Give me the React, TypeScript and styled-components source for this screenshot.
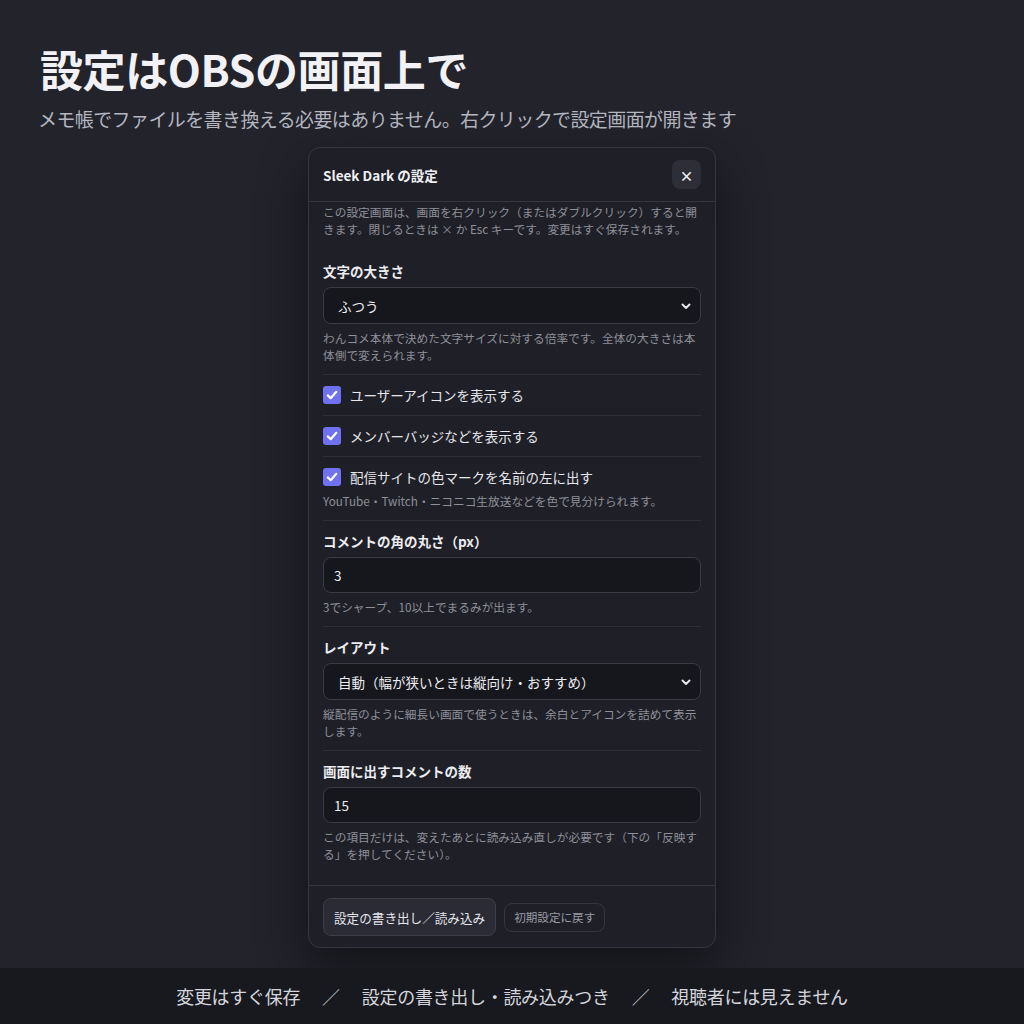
import React from "react";
import styled, { createGlobalStyle } from "styled-components";

const GlobalStyle = createGlobalStyle`
  html, body {
    margin: 0;
    padding: 0;
    background: #22232b;
  }
  body {
    font-family: "Noto Sans CJK JP", "Noto Sans", sans-serif;
    color: #e6e6ec;
  }
  * {
    box-sizing: border-box;
  }
`;

type CheckItem = { label: string; help?: string };

const checks: CheckItem[] = [
  { label: "ユーザーアイコンを表示する" },
  { label: "メンバーバッジなどを表示する" },
  {
    label: "配信サイトの色マークを名前の左に出す",
    help: "YouTube・Twitch・ニコニコ生放送などを色で見分けられます。",
  },
];

function Chevron() {
  return (
    <ChevronIcon width="12" height="12" viewBox="0 0 12 12">
      <path
        d="M2.5 4.5 L6 8 L9.5 4.5"
        fill="none"
        stroke="#e6e6ec"
        strokeWidth="2"
        strokeLinecap="round"
        strokeLinejoin="round"
      />
    </ChevronIcon>
  );
}

function Select({ options }: { options: string[] }) {
  return (
    <SelectWrap>
      <SelectBox defaultValue={options[0]}>
        {options.map((o) => (
          <option key={o}>{o}</option>
        ))}
      </SelectBox>
      <Chevron />
    </SelectWrap>
  );
}

function Check({ item }: { item: CheckItem }) {
  const [on, setOn] = React.useState(true);
  return (
    <Row>
      <CheckLine onClick={() => setOn(!on)}>
        <Box $on={on}>
          {on && (
            <svg width="14" height="14" viewBox="0 0 14 14">
              <path
                d="M2.8 7.4 L5.7 10.2 L11.3 3.8"
                fill="none"
                stroke="#fff"
                strokeWidth="2.2"
                strokeLinecap="round"
                strokeLinejoin="round"
              />
            </svg>
          )}
        </Box>
        <CheckText>{item.label}</CheckText>
      </CheckLine>
      {item.help && <Help $tight>{item.help}</Help>}
    </Row>
  );
}

export default function App() {
  return (
    <Page>
      <GlobalStyle />
      <Main>
        <Title>設定はOBSの画面上で</Title>
        <Lead>メモ帳でファイルを書き換える必要はありません。右クリックで設定画面が開きます</Lead>
        <Modal>
          <Header>
            <HeaderTitle>Sleek Dark の設定</HeaderTitle>
            <Close>×</Close>
          </Header>
          <Body>
            <Intro>
              この設定画面は、画面を右クリック（またはダブルクリック）すると開きます。閉じるときは × か Esc キーです。変更はすぐ保存されます。
            </Intro>
            <Field>
              <Label>文字の大きさ</Label>
              <Select options={["ふつう", "小さい", "大きい"]} />
              <Help>わんコメ本体で決めた文字サイズに対する倍率です。全体の大きさは本体側で変えられます。</Help>
            </Field>
            {checks.map((c) => (
              <Check key={c.label} item={c} />
            ))}
            <Field>
              <Label>コメントの角の丸さ（px）</Label>
              <Input defaultValue="3" />
              <Help>3でシャープ、10以上でまるみが出ます。</Help>
            </Field>
            <Field>
              <Label>レイアウト</Label>
              <Select options={["自動（幅が狭いときは縦向け・おすすめ）", "横向け", "縦向け"]} />
              <Help>縦配信のように細長い画面で使うときは、余白とアイコンを詰めて表示します。</Help>
            </Field>
            <Field $last>
              <Label>画面に出すコメントの数</Label>
              <Input defaultValue="15" />
              <Help>この項目だけは、変えたあとに読み込み直しが必要です（下の「反映する」を押してください）。</Help>
            </Field>
          </Body>
          <Actions>
            <Button>設定の書き出し／読み込み</Button>
            <Button $ghost>初期設定に戻す</Button>
          </Actions>
        </Modal>
      </Main>
      <Footer>
        <span>変更はすぐ保存</span>
        <Slash>／</Slash>
        <span>設定の書き出し・読み込みつき</span>
        <Slash>／</Slash>
        <span>視聴者には見えません</span>
      </Footer>
    </Page>
  );
}

const Page = styled.div`
  min-height: 100vh;
  display: flex;
  flex-direction: column;
`;

const Main = styled.main`
  flex: 1;
  display: flex;
  flex-direction: column;
  padding: 38px 40px 20px;
`;

const Title = styled.h1`
  margin: 0;
  font-size: 43px;
  line-height: 60px;
  font-weight: 700;
  color: #f2f2f6;
  letter-spacing: -0.4px;
`;

const Lead = styled.p`
  margin: 7px 0 0 -2px;
  font-size: 19px;
  line-height: 28px;
  color: #b4b6c0;
  letter-spacing: -0.6px;
`;

const Modal = styled.section`
  align-self: center;
  width: 408px;
  margin-top: 14px;
  background: #1f2027;
  border: 1px solid #353640;
  border-radius: 12px;
  box-shadow: 0 20px 50px rgba(0, 0, 0, 0.45);
  display: flex;
  flex-direction: column;
  overflow: hidden;
`;

const Header = styled.div`
  display: flex;
  align-items: center;
  justify-content: space-between;
  height: 54px;
  padding: 0 14px;
  border-bottom: 1px solid #353640;
`;

const HeaderTitle = styled.h2`
  margin: 0;
  font-size: 13.5px;
  font-weight: 700;
  color: #f0f0f4;
`;

const Close = styled.button`
  width: 29px;
  height: 29px;
  border: none;
  border-radius: 8px;
  background: #2d2e37;
  color: #f0f0f4;
  font-size: 14px;
  font-weight: 700;
  font-family: inherit;
  display: flex;
  align-items: center;
  justify-content: center;
  padding: 0;
`;

const Body = styled.div`
  padding: 1px 14px 12px 14px;
  display: flex;
  flex-direction: column;
`;

const Intro = styled.p`
  margin: 0 0 14px;
  font-size: 11.7px;
  line-height: 17px;
  color: #8e8f99;
`;

const Field = styled.div<{ $last?: boolean }>`
  display: flex;
  flex-direction: column;
  padding: 11px 0;
  border-bottom: ${(p) => (p.$last ? "none" : "1px solid #2d2e37")};
`;

const Label = styled.label`
  font-size: 13.5px;
  line-height: 18px;
  font-weight: 700;
  color: #ececf1;
  margin-bottom: 7px;
`;

const SelectWrap = styled.div`
  position: relative;
`;

const SelectBox = styled.select`
  appearance: none;
  width: 100%;
  height: 37px;
  padding: 0 30px 0 14px;
  background: #16171c;
  border: 1px solid #3a3b45;
  border-radius: 8px;
  color: #ececf1;
  font-family: inherit;
  font-size: 13.5px;
  outline: none;
`;

const ChevronIcon = styled.svg`
  position: absolute;
  right: 9px;
  top: 13px;
  pointer-events: none;
`;

const Input = styled.input`
  width: 100%;
  height: 36px;
  padding: 0 10px;
  background: #16171c;
  border: 1px solid #3a3b45;
  border-radius: 8px;
  color: #ececf1;
  font-family: inherit;
  font-size: 13.5px;
  outline: none;
`;

const Help = styled.p<{ $tight?: boolean }>`
  margin: ${(p) => (p.$tight ? "6px 0 0" : "5px 0 0")};
  font-size: 11.7px;
  line-height: 17px;
  color: #8e8f99;
`;

const Row = styled.div`
  display: flex;
  flex-direction: column;
  padding: 11px 0;
  border-bottom: 1px solid #2d2e37;
`;

const CheckLine = styled.label`
  display: flex;
  align-items: center;
  gap: 9px;
  cursor: pointer;
`;

const Box = styled.span<{ $on: boolean }>`
  width: 18px;
  height: 18px;
  border-radius: 3px;
  background: ${(p) => (p.$on ? "#6f71f0" : "transparent")};
  border: ${(p) => (p.$on ? "none" : "1px solid #5a5b66")};
  display: flex;
  align-items: center;
  justify-content: center;
  flex-shrink: 0;
`;

const CheckText = styled.span`
  font-size: 13.5px;
  line-height: 18px;
  color: #e6e6ec;
`;

const Actions = styled.div`
  display: flex;
  align-items: center;
  gap: 8px;
  padding: 12px 14px 11px;
  border-top: 1px solid #353640;
`;

const Button = styled.button<{ $ghost?: boolean }>`
  font-family: inherit;
  height: ${(p) => (p.$ghost ? "29px" : "38px")};
  padding: ${(p) => (p.$ghost ? "0 9px" : "0 10px")};
  font-size: ${(p) => (p.$ghost ? "11.6px" : "12.6px")};
  background: ${(p) => (p.$ghost ? "transparent" : "#2a2b34")};
  color: ${(p) => (p.$ghost ? "#9a9ba5" : "#e6e6ec")};
  border: 1px solid ${(p) => (p.$ghost ? "#353640" : "#3d3e48")};
  border-radius: 8px;
`;

const Footer = styled.footer`
  height: 56px;
  background: #18191e;
  display: flex;
  align-items: center;
  justify-content: center;
  gap: 22px;
  font-size: 18px;
  color: #d4d5dc;
  letter-spacing: -0.3px;
`;

const Slash = styled.span`
  color: #c4c5cc;
`;
